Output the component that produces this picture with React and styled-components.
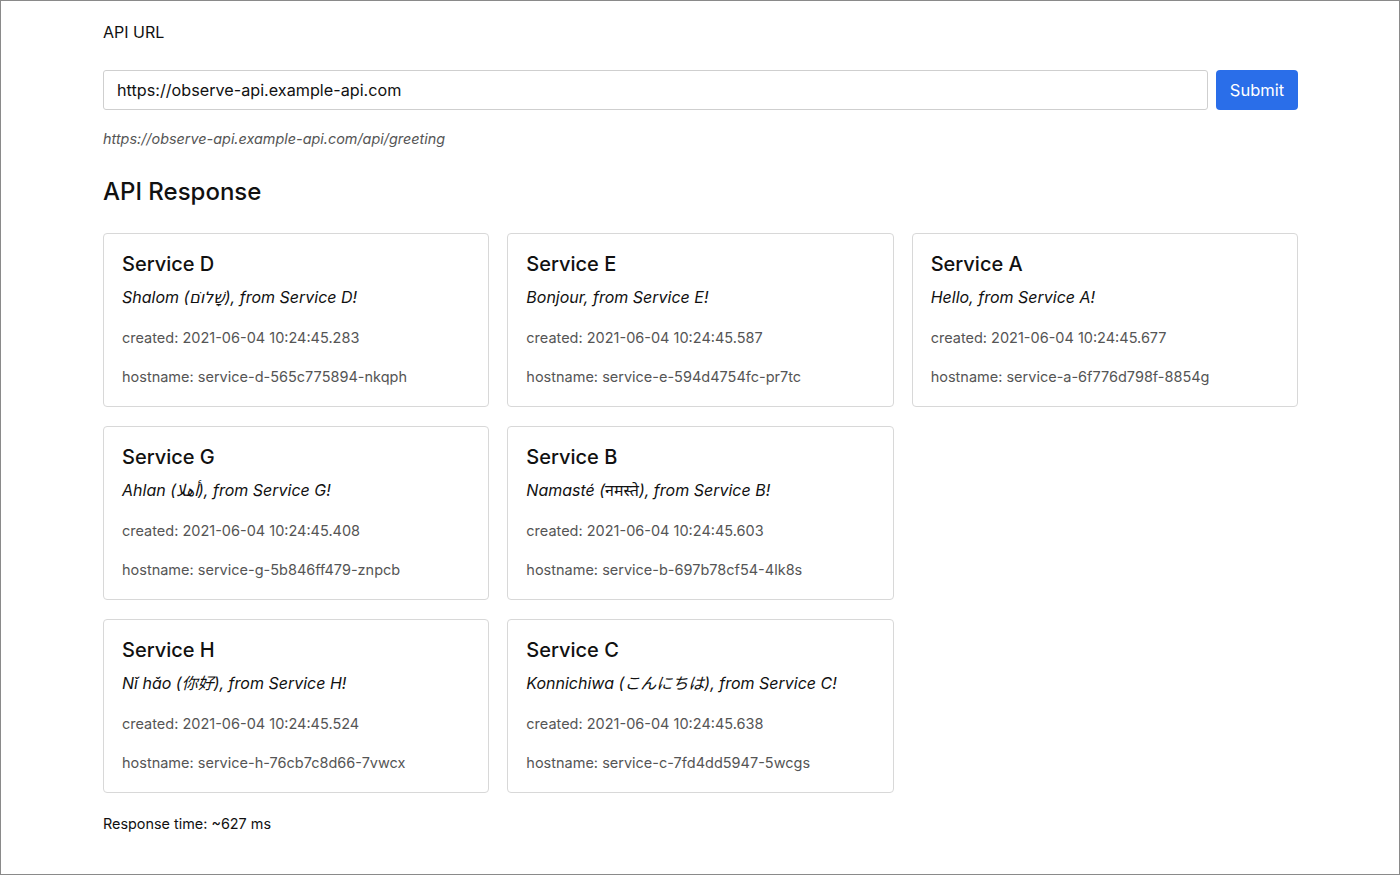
import React from "react";
import styled, { createGlobalStyle } from "styled-components";

const Global = createGlobalStyle`
  html, body { margin: 0; padding: 0; background: #fff; }
  body { font-family: Inter, "Noto Sans", "DejaVu Sans", "Noto Sans CJK JP", sans-serif; color: #111; }
  * { box-sizing: border-box; }
`;

const Frame = styled.div`
  width: 100vw;
  height: 100vh;
  border: 1px solid #8a8a8a;
  overflow: hidden;
`;

const Container = styled.main`
  width: 1195px;
  margin: 0 0 0 102px;
  padding-top: 19px;
`;

const Label = styled.label`
  display: block;
  font-size: 16px;
  line-height: 24px;
  color: #111;
`;

const FormRow = styled.form`
  display: flex;
  gap: 8px;
  margin-top: 26px;
`;

const Input = styled.input`
  flex: 1;
  height: 40px;
  border: 1px solid #cfcfcf;
  border-radius: 3px;
  padding: 0 13px;
  font-family: inherit;
  font-size: 16.2px;
  color: #111;
  outline: none;
`;

const Button = styled.button`
  width: 82px;
  height: 40px;
  border: none;
  border-radius: 4px;
  background: #2a6ee9;
  color: #fff;
  font-family: inherit;
  font-size: 16.5px;
`;

const Hint = styled.p`
  margin: 19px 0 0;
  font-size: 14.4px;
  line-height: 20px;
  font-style: italic;
  color: #555;
`;

const Heading = styled.h2`
  margin: 28px 0 0;
  font-size: 24px;
  line-height: 29px;
  font-weight: 500;
`;

const Grid = styled.div`
  display: grid;
  grid-template-columns: repeat(3, 1fr);
  column-gap: 18px;
  row-gap: 19px;
  margin-top: 27px;
`;

const Card = styled.div`
  border: 1px solid #d8d8d8;
  border-radius: 4px;
  padding: 18px;
`;

const Title = styled.h3`
  margin: 0;
  font-size: 20px;
  line-height: 24px;
  font-weight: 450;
`;

const Greeting = styled.p`
  margin: 9px 0 0;
  font-size: 16px;
  line-height: 24px;
  font-style: italic;
`;

const Meta = styled.p`
  margin: ${(p) => p.$gap}px 0 0;
  font-size: 14.5px;
  line-height: 22px;
  color: #555;
`;

const Footer = styled.p`
  margin: 21px 0 0;
  font-size: 14.4px;
  line-height: 20px;
`;

const services = [
  ["Service D", "Shalom (שָׁלוֹם), from Service D!", "2021-06-04 10:24:45.283", "service-d-565c775894-nkqph"],
  ["Service E", "Bonjour, from Service E!", "2021-06-04 10:24:45.587", "service-e-594d4754fc-pr7tc"],
  ["Service A", "Hello, from Service A!", "2021-06-04 10:24:45.677", "service-a-6f776d798f-8854g"],
  ["Service G", "Ahlan (أهلا), from Service G!", "2021-06-04 10:24:45.408", "service-g-5b846ff479-znpcb"],
  ["Service B", "Namasté (नमस्ते), from Service B!", "2021-06-04 10:24:45.603", "service-b-697b78cf54-4lk8s"],
  null,
  ["Service H", "Nǐ hǎo (你好), from Service H!", "2021-06-04 10:24:45.524", "service-h-76cb7c8d66-7vwcx"],
  ["Service C", "Konnichiwa (こんにちは), from Service C!", "2021-06-04 10:24:45.638", "service-c-7fd4dd5947-5wcgs"],
];

export default function App() {
  return (
    <Frame>
      <Global />
      <Container>
        <Label htmlFor="api">API URL</Label>
        <FormRow onSubmit={(e) => e.preventDefault()}>
          <Input id="api" defaultValue="https://observe-api.example-api.com" />
          <Button type="submit">Submit</Button>
        </FormRow>
        <Hint>https://observe-api.example-api.com/api/greeting</Hint>
        <Heading>API Response</Heading>
        <Grid>
          {services.map((s, i) =>
            s ? (
              <Card key={i}>
                <Title>{s[0]}</Title>
                <Greeting>{s[1]}</Greeting>
                <Meta $gap={18}>created: {s[2]}</Meta>
                <Meta $gap={17}>hostname: {s[3]}</Meta>
              </Card>
            ) : (
              <div key={i} />
            )
          )}
        </Grid>
        <Footer>Response time: ~627 ms</Footer>
      </Container>
    </Frame>
  );
}
